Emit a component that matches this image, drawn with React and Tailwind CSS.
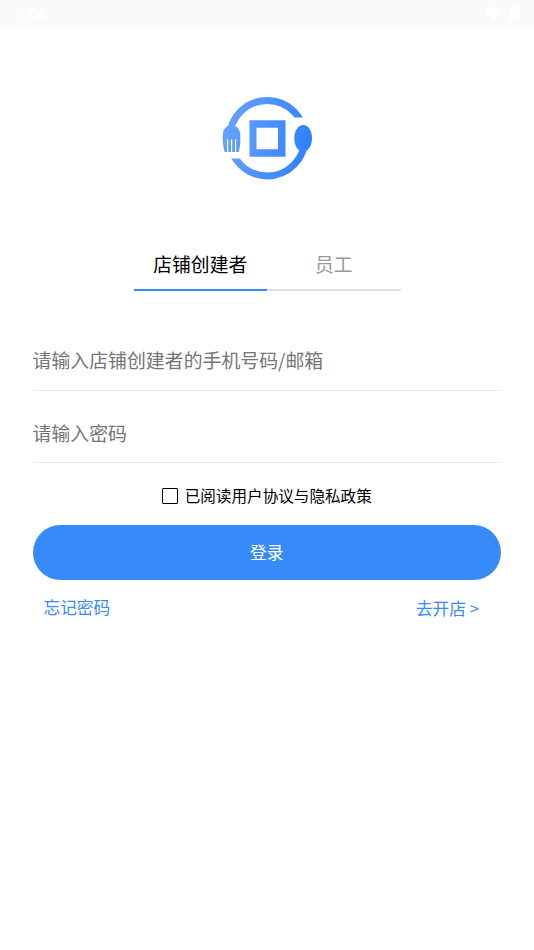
import React, { useState } from "react";

function StatusBar() {
  return (
    <div className="flex h-[27px] items-center justify-between bg-[#fafafa] pl-[15px] pr-[15px] text-white">
      <span className="pt-px font-['Roboto',sans-serif] text-[16px] font-medium leading-[27px]">
        9:56
      </span>
      <div className="flex items-center gap-2">
        <svg className="h-[14px] w-[17px]" viewBox="0 0 17 14" fill="currentColor">
          <path d="M0 3.2C5-1 12-1 17 3.2L8.5 14Z" />
        </svg>
        <svg className="h-[15px] w-[9px]" viewBox="0 0 9 15">
          <path
            d="M3 0h3v1.5h2q1 0 1 1V14q0 1-1 1H1q-1 0-1-1V2.500q0-1 1-1h2Z"
            fill="currentColor"
          />
          <path d="M5 4L2.500 9h1.700v3.500L6.700 7.500H5Z" fill="#fafafa" />
        </svg>
      </div>
    </div>
  );
}

function Logo() {
  return (
    <svg className="h-[95px] w-[105px]" viewBox="0 0 105 95">
      <defs>
        <linearGradient id="blue" gradientUnits="userSpaceOnUse" x1="8" y1="40" x2="97" y2="56">
          <stop offset="0" stopColor="#66a3ff" />
          <stop offset="1" stopColor="#2f80ff" />
        </linearGradient>
        <clipPath id="ring">
          <path d="M0 0H105V27.500H55V45H0Z" />
          <path d="M0 68.500H55V58H105V95H0Z" />
        </clipPath>
      </defs>
      <circle
        cx="52.2"
        cy="48.200"
        r="37.700"
        fill="none"
        stroke="url(#blue)"
        strokeWidth="7"
        clipPath="url(#ring)"
      />
      {/* plate */}
      <path
        fill="url(#blue)"
        fillRule="evenodd"
        d="M34.500 30.300H70.500V66.700H34.500ZM41.500 37.700V59.200H63V37.700Z"
      />
      {/* fork */}
      <path
        fill="url(#blue)"
        d="M16.500 35.300C20.500 35.300 24.500 38 25.200 44C25.700 50 25.200 57 23.800 61.900H21.200V49.500H20V61.900H17.200V49.500H16V61.900H13.200V49.500H12V61.900H9.700C8 57 7.300 50 7.900 44C8.500 38 12.500 35.300 16.500 35.300Z"
      />
      {/* spoon */}
      <path
        fill="url(#blue)"
        d="M88.300 35C93.500 35 97 41 97 48C97 55 94 60 90 61.300L84.500 60.500C81 58 79.300 54 79.300 48C79.300 41 83 35 88.300 35Z"
      />
    </svg>
  );
}

function Tab({ label, active, onClick }) {
  return (
    <button
      onClick={onClick}
      className={`h-[52px] flex-1 border-b-2 pt-px text-[18.8px] ${
        active ? "border-[#378bf8] text-black" : "border-[#e0e0e0] text-[#999999]"
      }`}
    >
      {label}
    </button>
  );
}

function Field({ placeholder, type }) {
  return (
    <input
      type={type}
      placeholder={placeholder}
      className="block h-[72.500px] w-full border-b border-[#ebebeb] pt-[12px] text-[18.9px] outline-none placeholder:text-[#757575]"
    />
  );
}

function App() {
  const [tab, setTab] = useState("owner");
  const [agreed, setAgreed] = useState(false);

  return (
    <div className="min-h-[950px] w-[534px] bg-white font-['Noto_Sans_CJK_SC',sans-serif]">
      <StatusBar />

      <div className="flex justify-center pt-[63px]">
        <Logo />
      </div>

      <div className="mx-auto mt-[53.5px] flex w-[267px]">
        <Tab label="店铺创建者" active={tab === "owner"} onClick={() => setTab("owner")} />
        <Tab label="员工" active={tab === "staff"} onClick={() => setTab("staff")} />
      </div>

      <div className="pl-[32.5px] pr-[33px] pt-[27.5px]">
        <Field type="text" placeholder="请输入店铺创建者的手机号码/邮箱" />
        <Field type="password" placeholder="请输入密码" />

        <label className="mt-[21px] flex h-6 items-center justify-center gap-[7px] text-[15.600px] text-black">
          <input
            type="checkbox"
            checked={agreed}
            onChange={() => setAgreed(!agreed)}
            className="size-4 appearance-none rounded-[1px] border-[1.500px] border-black checked:bg-[#378bf8]"
          />
          已阅读用户协议与隐私政策
        </label>

        <button className="mt-[16.500px] block h-[55.500px] w-full rounded-full bg-[#378bf8] text-[16.700px] text-white">
          登录
        </button>

        <div className="flex justify-between pl-[11px] pr-[22px] pt-[15px] text-[16.700px] text-[#378bf8]">
          <a>忘记密码</a>
          <a className="pt-px">去开店 &gt;</a>
        </div>
      </div>
    </div>
  );
}

export default App;
